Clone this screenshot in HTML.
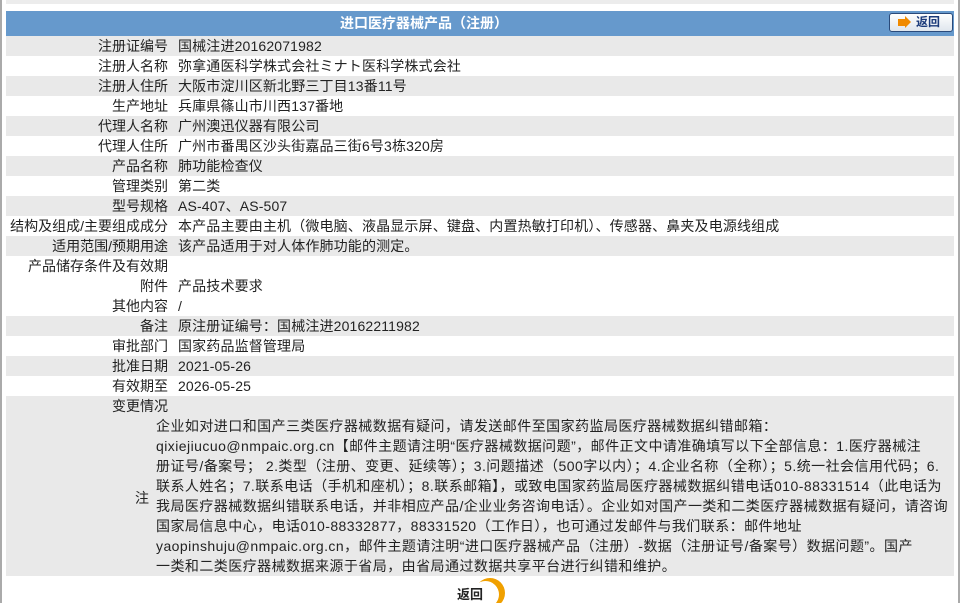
<!DOCTYPE html>
<html><head><meta charset="utf-8"><style>
html,body{margin:0;padding:0;width:964px;height:603px;overflow:hidden;background:#fff;position:relative;
font-family:"Liberation Sans","Noto Sans CJK SC",sans-serif;font-size:14px;color:#222;}
.lb{position:absolute;left:0;top:0;width:2px;height:603px;background:#aaa}
.rb{position:absolute;left:958px;top:0;width:2px;height:603px;background:#aaa}
.top{position:absolute;left:6px;top:0;width:948px;height:4px;background:#ececec}
.hd{position:absolute;left:6px;top:11px;width:948px;height:25px;background:#6699cc;color:#fff;font-weight:bold;font-size:14px;line-height:25px}
.hd .t{position:absolute;left:334px;top:0}
.btn{position:absolute;left:883px;top:2px;width:62px;height:17px;border:1px solid #2a4a7a;border-radius:3px;background:linear-gradient(#fff,#dfe6ee);color:#1a3a7a;font-weight:bold;font-size:12px;line-height:17px}
.btn .a{position:absolute;left:8px;top:5px;width:7px;height:7px;background:#f08a00}
.btn .a:after{content:"";position:absolute;left:7px;top:-3px;border-left:6px solid #f08a00;border-top:6.5px solid transparent;border-bottom:6.5px solid transparent}
.btn .x{position:absolute;left:26px;top:0}
.row{position:absolute;left:6px;width:948px;height:20px;line-height:20px}
.g{background:#e9e9e9}
.row .l{position:absolute;right:786px;top:0;white-space:nowrap}
.row .v{position:absolute;left:172px;top:0;white-space:nowrap;letter-spacing:0.15px}
.note{position:absolute;left:6px;top:416px;width:948px;height:160px;background:#e9e9e9}
.note .l{position:absolute;left:129px;top:72px}
.note .v{position:absolute;left:150px;top:0;line-height:20px;white-space:nowrap;letter-spacing:0.45px}
.bb{position:absolute;left:457px;top:584px;font-weight:bold;font-size:13px;color:#222}
.circ{position:absolute;left:475px;top:578px;width:30px;height:30px;border-radius:50%;background:#f0a000}
.circ:after{content:"";position:absolute;left:-3px;top:3px;width:27px;height:27px;border-radius:50%;background:#fff}
</style></head><body>
<div class="lb"></div><div class="rb"></div><div class="top"></div>
<div class="hd"><span class="t">进口医疗器械产品（注册）</span>
<div class="btn"><span class="a"></span><span class="x">返回</span></div></div>
<div class="row g" style="top:36px"><span class="l">注册证编号</span><span class="v">国械注进20162071982</span></div>
<div class="row" style="top:56px"><span class="l">注册人名称</span><span class="v">弥拿通医科学株式会社ミナト医科学株式会社</span></div>
<div class="row g" style="top:76px"><span class="l">注册人住所</span><span class="v">大阪市淀川区新北野三丁目13番11号</span></div>
<div class="row" style="top:96px"><span class="l">生产地址</span><span class="v">兵庫県篠山市川西137番地</span></div>
<div class="row g" style="top:116px"><span class="l">代理人名称</span><span class="v">广州澳迅仪器有限公司</span></div>
<div class="row" style="top:136px"><span class="l">代理人住所</span><span class="v">广州市番禺区沙头街嘉品三街6号3栋320房</span></div>
<div class="row g" style="top:156px"><span class="l">产品名称</span><span class="v">肺功能检查仪</span></div>
<div class="row" style="top:176px"><span class="l">管理类别</span><span class="v">第二类</span></div>
<div class="row g" style="top:196px"><span class="l">型号规格</span><span class="v">AS-407、AS-507</span></div>
<div class="row" style="top:216px"><span class="l">结构及组成/主要组成成分</span><span class="v">本产品主要由主机（微电脑、液晶显示屏、键盘、内置热敏打印机）、传感器、鼻夹及电源线组成</span></div>
<div class="row g" style="top:236px"><span class="l">适用范围/预期用途</span><span class="v">该产品适用于对人体作肺功能的测定。</span></div>
<div class="row" style="top:256px"><span class="l">产品储存条件及有效期</span><span class="v"></span></div>
<div class="row" style="top:276px"><span class="l">附件</span><span class="v">产品技术要求</span></div>
<div class="row" style="top:296px"><span class="l">其他内容</span><span class="v">/</span></div>
<div class="row g" style="top:316px"><span class="l">备注</span><span class="v">原注册证编号：国械注进20162211982</span></div>
<div class="row" style="top:336px"><span class="l">审批部门</span><span class="v">国家药品监督管理局</span></div>
<div class="row g" style="top:356px"><span class="l">批准日期</span><span class="v">2021-05-26</span></div>
<div class="row" style="top:376px"><span class="l">有效期至</span><span class="v">2026-05-25</span></div>
<div class="row g" style="top:396px"><span class="l">变更情况</span></div>
<div class="note"><span class="l">注</span><div class="v">企业如对进口和国产三类医疗器械数据有疑问，请发送邮件至国家药监局医疗器械数据纠错邮箱：<br>qixiejiucuo@nmpaic.org.cn【邮件主题请注明“医疗器械数据问题”，邮件正文中请准确填写以下全部信息：1.医疗器械注<br>册证号/备案号； 2.类型（注册、变更、延续等）；3.问题描述（500字以内）；4.企业名称（全称）；5.统一社会信用代码；6.<br>联系人姓名；7.联系电话（手机和座机）；8.联系邮箱】，或致电国家药监局医疗器械数据纠错电话010-88331514（此电话为<br>我局医疗器械数据纠错联系电话，并非相应产品/企业业务咨询电话）。企业如对国产一类和二类医疗器械数据有疑问，请咨询<br>国家局信息中心，电话010-88332877，88331520（工作日），也可通过发邮件与我们联系：邮件地址<br>yaopinshuju@nmpaic.org.cn，邮件主题请注明“进口医疗器械产品（注册）-数据（注册证号/备案号）数据问题”。国产<br>一类和二类医疗器械数据来源于省局，由省局通过数据共享平台进行纠错和维护。</div></div>
<div class="circ"></div>
<div class="bb">返回</div>
</body></html>
